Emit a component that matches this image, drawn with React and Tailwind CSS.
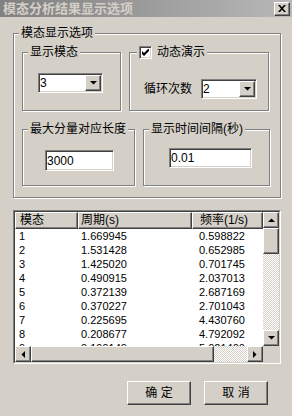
import React from "react";

// classic win2k bevels
const raised =
  "bg-[#d4d0c8] border border-t-white border-l-white border-r-[#404040] border-b-[#404040] shadow-[inset_-1px_-1px_0_#808080]";
const sunken =
  "bg-white border border-t-[#808080] border-l-[#808080] border-r-white border-b-white shadow-[inset_1px_1px_0_#404040,inset_-1px_-1px_0_#d4d0c8]";
const etched = "border border-[#808080] shadow-[1px_1px_0_#fff,inset_1px_1px_0_#fff]";
const dither =
  "bg-[image:repeating-conic-gradient(#ffffff_0%_25%,#d4d0c8_0%_50%)] bg-[length:2px_2px]";

const rows = [
  ["1", "1.669945", "0.598822"],
  ["2", "1.531428", "0.652985"],
  ["3", "1.425020", "0.701745"],
  ["4", "0.490915", "2.037013"],
  ["5", "0.372139", "2.687169"],
  ["6", "0.370227", "2.701043"],
  ["7", "0.225695", "4.430760"],
  ["8", "0.208677", "4.792092"],
  ["9", "0.199149", "5.021400"],
];

function Arrow({ dir }) {
  const pts = {
    down: "0,0 7,0 3.5,3.5",
    up: "0,4 7,4 3.5,0.5",
    left: "4,0 4,7 0.5,3.5",
    right: "0,0 0,7 3.5,3.5",
  };
  const vert = dir === "up" || dir === "down";
  return (
    <svg width={vert ? 7 : 4} height={vert ? 4 : 7} viewBox={vert ? "0 0 7 4" : "0 0 4 7"}>
      <polygon points={pts[dir]} fill="#000" />
    </svg>
  );
}

function Group({ label, className = "", labelClass = "", children }) {
  return (
    <div className={`relative ${etched} ${className}`}>
      <div
        className={`absolute left-[5px] -top-[8px] px-[2px] h-[14px] leading-[14px] bg-[#d4d0c8] flex items-center whitespace-nowrap ${labelClass}`}
      >
        {label}
      </div>
      {children}
    </div>
  );
}

function Combo({ value, className = "" }) {
  return (
    <div className={`${sunken} flex p-[1px] ${className}`}>
      <span className="flex-1 leading-[16px] text-[12px]">{value}</span>
      <div className={`${raised} w-[16px] flex items-center justify-center`}>
        <Arrow dir="down" />
      </div>
    </div>
  );
}

function TextBox({ value, className = "" }) {
  return (
    <div className={`${sunken} flex items-center p-[1px] text-[12px] ${className}`}>
      {value}
    </div>
  );
}

function ScrollBtn({ dir, className = "" }) {
  return (
    <div className={`${raised} flex items-center justify-center shrink-0 ${className}`}>
      <Arrow dir={dir} />
    </div>
  );
}

export default function App() {
  return (
    <div className="w-[292px] h-[416px] bg-[#d4d0c8] flex flex-col overflow-hidden text-black text-[12px] font-['Liberation_Sans','Noto_Sans_CJK_SC',sans-serif]">
      {/* title bar */}
      <div className="h-[17px] shrink-0 flex items-center pl-[3px] pr-[2px] bg-gradient-to-r from-[#808080] to-[#b8b8b8]">
        <span className="flex-1 text-[13px] font-bold text-[#d4d0c8] leading-[15px]">模态分析结果显示选项</span>
        <div className={`${raised} w-[16px] h-[14px] flex items-center justify-center`}>
          <svg width="8" height="7" viewBox="0 0 8 7">
            <path d="M0 0h2l2 2.3 2-2.3h2l-3 3.5 3 3.5h-2l-2-2.3-2 2.3h-2l3-3.5z" fill="#000" />
          </svg>
        </div>
      </div>

      {/* options group */}
      <Group label="模态显示选项" className="ml-[13px] mt-[16px] w-[268px] h-[165px] shrink-0 pl-[8px] pt-[18px]">
        <div className="flex gap-[8px]">
          <Group label="显示模态" className="w-[99px] h-[59px] pl-[15px] pt-[20px]">
            <Combo value="3" className="w-[65px] h-[20px]" />
          </Group>
          <Group
            className="w-[140px] h-[59px] pl-[14px] pt-[26px]"
            labelClass="left-[7px] gap-[5px]"
            label={
              <>
                <span className={`${sunken} w-[13px] h-[13px] flex items-center justify-center`}>
                  <svg width="7" height="7" viewBox="0 0 7 7">
                    <polygon points="0,2 2,4 7,-1 7,2 2,7 0,5" fill="#000" />
                  </svg>
                </span>
                <span>动态演示</span>
              </>
            }
          >
            <div className="flex items-center gap-[9px]">
              <span>循环次数</span>
              <Combo value="2" className="w-[56px] h-[20px]" />
            </div>
          </Group>
        </div>
        <div className="flex gap-[8px] mt-[18px]">
          <Group label="最大分量对应长度" className="w-[113px] h-[57px] pl-[22px] pt-[20px]">
            <TextBox value="3000" className="w-[69px] h-[21px]" />
          </Group>
          <Group label="显示时间间隔(秒)" className="w-[127px] h-[57px] pl-[25px] pt-[18px]">
            <TextBox value="0.01" className="w-[83px] h-[20px]" />
          </Group>
        </div>
      </Group>

      {/* result list */}
      <div className="ml-[13px] mt-[12px] w-[268px] h-[154px] shrink-0 border border-t-[#808080] border-l-[#808080] border-r-white border-b-white">
        <div className="h-full flex flex-col border border-t-[#404040] border-l-[#404040] border-r-[#d4d0c8] border-b-[#d4d0c8]">
          <div className="h-[134px] flex">
            <div className="flex-1 bg-white overflow-hidden">
              <div className="flex h-[17px]">
                <div className={`${raised} w-[63px] pl-[4px] leading-[15px]`}>模态</div>
                <div className={`${raised} w-[114px] pl-[2px] leading-[15px]`}>周期(s)</div>
                <div className={`${raised} w-[71px] pl-[7px] leading-[15px]`}>频率(1/s)</div>
              </div>
              {rows.map((r) => (
                <div key={r[0]} className="flex h-[14px] leading-[14px] text-[11px]">
                  <div className="w-[63px] pl-[4px]">{r[0]}</div>
                  <div className="w-[114px] pl-[3px]">{r[1]}</div>
                  <div className="w-[71px] pl-[7px]">{r[2]}</div>
                </div>
              ))}
            </div>
            <div className="w-[16px] flex flex-col">
              <ScrollBtn dir="up" className="h-[16px]" />
              <div className={`${raised} h-[26px]`} />
              <div className={`flex-1 ${dither}`} />
              <ScrollBtn dir="down" className="h-[16px]" />
            </div>
          </div>
          <div className="h-[16px] flex">
            <ScrollBtn dir="left" className="w-[16px]" />
            <div className={`${raised} w-[183px]`} />
            <div className={`flex-1 ${dither}`} />
            <ScrollBtn dir="right" className="w-[16px]" />
            <div className="w-[16px] bg-[#d4d0c8]" />
          </div>
        </div>
      </div>

      {/* buttons */}
      <div className="flex justify-end gap-[13px] pr-[24px] mt-[17px]">
        <button className={`${raised} w-[64px] h-[24px] text-[12px]`}>确 定</button>
        <button className={`${raised} w-[64px] h-[24px] text-[12px]`}>取 消</button>
      </div>
    </div>
  );
}
